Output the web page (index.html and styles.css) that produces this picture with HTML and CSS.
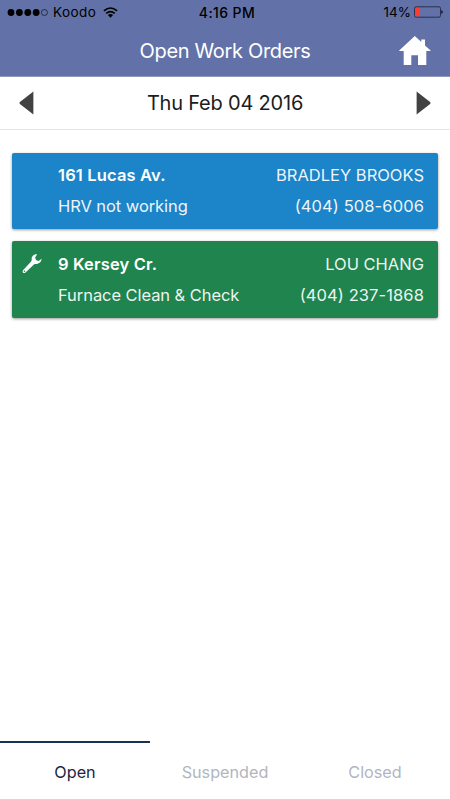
FILE: index.html
```html
<!DOCTYPE html>
<html lang="en">
<head>
    <meta charset="UTF-8">
    <meta name="viewport" content="width=device-width, initial-scale=1.0">
    <title>Open Work Orders</title>
    <link rel="stylesheet" href="styles.css">
</head>
<body>
    <div class="header">
        <div class="status-bar">
            <div class="carrier">
                <svg class="signal" width="41" height="9" viewBox="0 0 41 9">
                    <circle cx="4" cy="4.5" r="3.4"/>
                    <circle cx="12.4" cy="4.5" r="3.4"/>
                    <circle cx="20.8" cy="4.5" r="3.4"/>
                    <circle cx="29.2" cy="4.5" r="3.4"/>
                    <circle cx="37.4" cy="4.5" r="3" fill="none" stroke="#000" stroke-width="0.6"/>
                </svg>
                <span class="carrier-name">Koodo</span>
                <svg class="wifi" width="15" height="11" viewBox="0 0 15 11">
                    <path d="M0.9 3.9Q7.5 -1.9 14.1 3.9M3.2 6.4Q7.5 2.7 11.8 6.4" fill="none" stroke="#000" stroke-width="1.6"/>
                    <path d="M4.9 8.1Q7.5 6.1 10.1 8.1L7.5 10.7Z"/>
                </svg>
            </div>
            <div class="time">4:16 PM</div>
            <div class="power">
                <span>14%</span>
                <svg width="29" height="12" viewBox="0 0 29 12">
                    <rect x="0.5" y="0.8" width="26" height="10.4" rx="1.5" fill="none" stroke="#1c2236" stroke-width="0.8"/>
                    <rect x="1.4" y="1.7" width="3.9" height="8.6" rx="0.5" fill="#ff3b30"/>
                    <path d="M27.4 4Q30 6 27.4 8Z"/>
                </svg>
            </div>
        </div>
        <div class="nav-bar">
            <h1>Open Work Orders</h1>
            <svg class="home" width="32" height="29" viewBox="0 0 32 29">
                <path d="M15.8 0L22.3 6V3.4H26V9.4L31.6 14.6V15H27.3V29H19V19.3H12.3V29H4.7V15H0.2V14.6Z"/>
            </svg>
        </div>
    </div>

    <div class="date-bar">
        <svg width="15" height="24" viewBox="0 0 15 24"><path d="M14.4 0.5V23.5L0.6 12.7V11.3Z"/></svg>
        <div class="date">Thu Feb 04 2016</div>
        <svg width="15" height="24" viewBox="0 0 15 24"><path d="M0.6 0.5V23.5L14.4 12.7V11.3Z"/></svg>
    </div>

    <div class="orders">
        <div class="order blue">
            <div class="icon"></div>
            <div class="info">
                <div class="row"><span class="address">161 Lucas Av.</span><span class="name">BRADLEY BROOKS</span></div>
                <div class="row"><span class="job">HRV not working</span><span class="phone">(404) 508-6006</span></div>
            </div>
        </div>
        <div class="order green">
            <div class="icon">
                <svg width="20" height="20" viewBox="0 0 20 20">
                    <path fill-rule="evenodd" d="M15.1 0.3C12 0 9.3 2.2 9.7 5.5C9.8 6.6 9.4 7.3 8.7 8L1.2 16C-0.4 17.9 1.7 20.1 3.5 18.5L11.4 10.9C12 10.3 12.6 10 13.4 10.1C16.8 10.4 19.7 7.8 19.6 4.7L16.6 6.9L13.9 6.1L13.2 3.4ZM2.5 16.5A0.75 0.75 0 1 1 2.4 18A0.75 0.75 0 1 1 2.5 16.5Z"/>
                </svg>
            </div>
            <div class="info">
                <div class="row"><span class="address">9 Kersey Cr.</span><span class="name">LOU CHANG</span></div>
                <div class="row"><span class="job">Furnace Clean &amp; Check</span><span class="phone">(404) 237-1868</span></div>
            </div>
        </div>
    </div>

    <div class="tabs">
        <div class="tab active">Open</div>
        <div class="tab">Suspended</div>
        <div class="tab">Closed</div>
    </div>
</body>
</html>
```
FILE: styles.css
```css
body {
    font-family: Inter, "Liberation Sans", sans-serif;
    margin: 0;
    height: 800px;
    display: flex;
    flex-direction: column;
    background-color: white;
    overflow: hidden;
}
svg {
    display: block;
}
.header {
    background-color: #6272a8;
    height: 76px;
    border-bottom: 1px solid #8f99b9;
}
.status-bar {
    display: grid;
    grid-template-columns: 1fr auto 1fr;
    align-items: center;
    height: 24px;
    padding: 0 7px;
    font-size: 13.5px;
    color: black;
}
.carrier {
    display: flex;
    align-items: center;
    letter-spacing: 0.45px;
}
.carrier-name {
    margin: 0 7px 0 5px;
}
.time {
    padding-left: 4px;
    font-size: 14px;
    font-weight: 500;
    letter-spacing: 0.4px;
}
.power {
    display: flex;
    align-items: center;
    justify-content: flex-end;
    gap: 3px;
}
.nav-bar {
    display: grid;
    grid-template-columns: 1fr auto 1fr;
    align-items: center;
    height: 53px;
    padding: 0 19px;
}
h1 {
    grid-column: 2;
    margin: 0;
    font-size: 20px;
    font-weight: 400;
    letter-spacing: -0.33px;
    color: white;
}
.home {
    justify-self: end;
    fill: white;
}
.date-bar {
    display: flex;
    align-items: center;
    justify-content: space-between;
    height: 52px;
    padding: 0 19px;
    border-bottom: 1px solid #e5e5e5;
    fill: #424242;
}
.date {
    font-size: 20px;
    letter-spacing: -0.2px;
    color: #1c1c1c;
}
.orders {
    flex: 1;
    padding: 22.5px 12px 0;
}
.order {
    display: flex;
    height: 76.5px;
    margin-bottom: 12px;
    border-radius: 2px;
    color: white;
    font-size: 16.5px;
    box-shadow: 0 1px 3px rgba(0, 0, 0, 0.4);
}
.blue {
    background-color: #1c84c8;
}
.green {
    background-color: #1f844e;
}
.icon {
    width: 36px;
    padding: 12.5px 0 0 10px;
    fill: white;
}
.info {
    flex: 1;
    padding: 7.5px 14px 0 0;
}
.row {
    display: flex;
    justify-content: space-between;
    line-height: 31px;
    white-space: nowrap;
}
.address {
    font-weight: 600;
    letter-spacing: 0.15px;
}
.job, .name, .phone {
    opacity: 0.92;
}
.job {
    letter-spacing: -0.07px;
}
.phone {
    letter-spacing: 0.1px;
}
.tabs {
    display: flex;
    height: 58px;
    border-bottom: 1px solid #d8d8d8;
}
.tab {
    flex: 1;
    border-top: 2px solid transparent;
    text-align: center;
    line-height: 58px;
    font-size: 16.2px;
    color: #b2b5bf;
}
.tab.active {
    border-top-color: #183257;
    color: #1b2446;
}
```
